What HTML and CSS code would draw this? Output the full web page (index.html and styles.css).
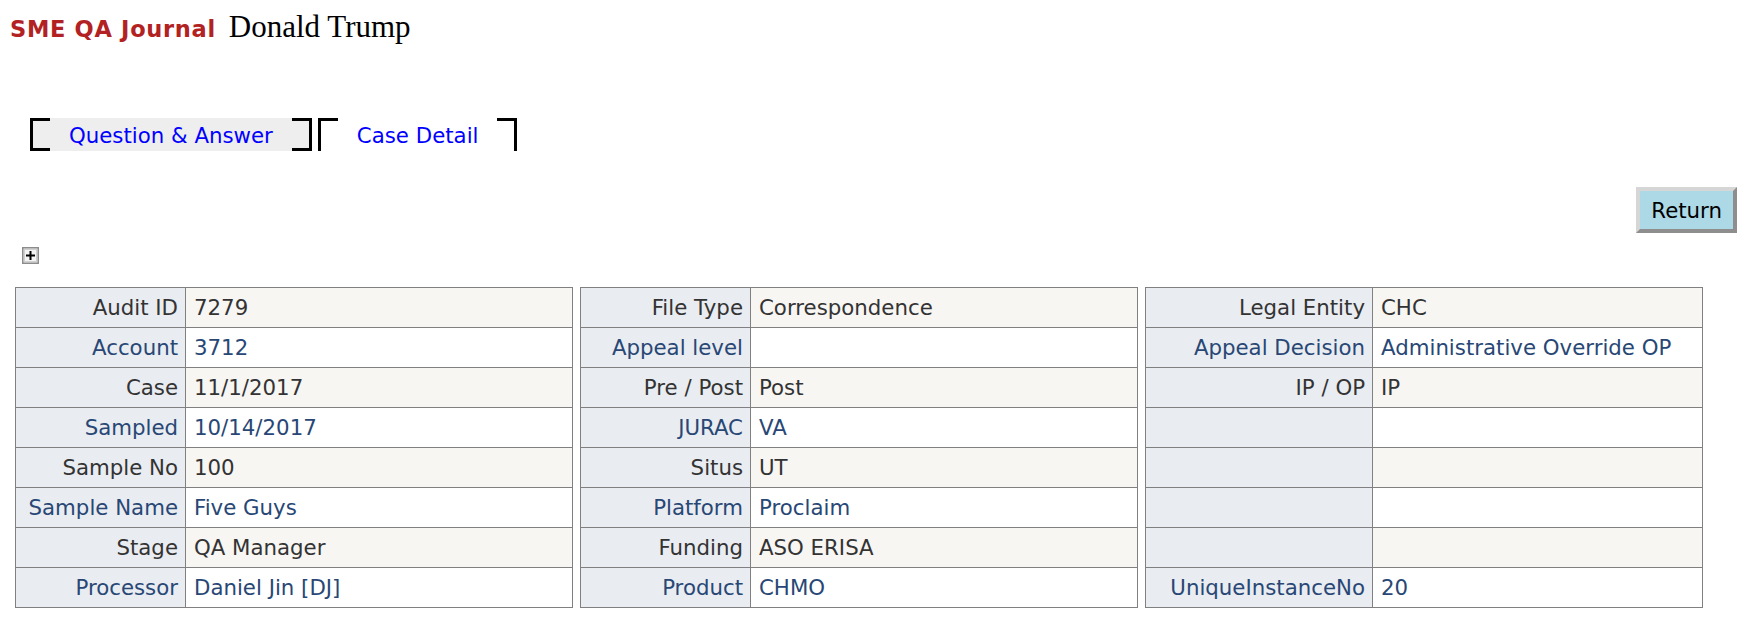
FILE: index.html
```html
<!DOCTYPE html>
<html>
<head>
<meta charset="utf-8">
<title>SME QA Journal</title>
<link rel="stylesheet" href="styles.css">
</head>
<body>
<div class="header">
  <span class="app">SME QA Journal</span>
  <span class="user">Donald Trump</span>
</div>
<div class="tabs">
  <a class="tab">Question &amp; Answer</a>
  <a class="tab active">Case Detail</a>
</div>
<div class="actions">
  <button class="btn">Return</button>
</div>
<div class="expander">
  <svg width="17" height="17" viewBox="0 0 17 17">
    <rect x="0.75" y="0.75" width="15.5" height="15.5" fill="#efefef" stroke="#8c8c8c" stroke-width="1.5"/>
    <rect x="2.5" y="2.5" width="12" height="12" fill="#f4f4f4" stroke="#d0d0d0" stroke-width="1"/>
    <path d="M4 8.5 H13 M8.5 4 V13" stroke="#000" stroke-width="2"/>
  </svg>
</div>
<div class="panels">
  <table class="details">
    <colgroup><col class="c-label"><col></colgroup>
    <tr class="odd"><td class="lbl">Audit ID</td><td>7279</td></tr>
    <tr class="even"><td class="lbl">Account</td><td>3712</td></tr>
    <tr class="odd"><td class="lbl">Case</td><td>11/1/2017</td></tr>
    <tr class="even"><td class="lbl">Sampled</td><td>10/14/2017</td></tr>
    <tr class="odd"><td class="lbl">Sample No</td><td>100</td></tr>
    <tr class="even"><td class="lbl">Sample Name</td><td>Five Guys</td></tr>
    <tr class="odd"><td class="lbl">Stage</td><td>QA Manager</td></tr>
    <tr class="even"><td class="lbl">Processor</td><td>Daniel Jin [DJ]</td></tr>
  </table>
  <table class="details">
    <colgroup><col class="c-label"><col></colgroup>
    <tr class="odd"><td class="lbl">File Type</td><td>Correspondence</td></tr>
    <tr class="even"><td class="lbl">Appeal level</td><td></td></tr>
    <tr class="odd"><td class="lbl">Pre / Post</td><td>Post</td></tr>
    <tr class="even"><td class="lbl">JURAC</td><td>VA</td></tr>
    <tr class="odd"><td class="lbl">Situs</td><td>UT</td></tr>
    <tr class="even"><td class="lbl">Platform</td><td>Proclaim</td></tr>
    <tr class="odd"><td class="lbl">Funding</td><td>ASO ERISA</td></tr>
    <tr class="even"><td class="lbl">Product</td><td>CHMO</td></tr>
  </table>
  <table class="details">
    <colgroup><col class="c-label-wide"><col></colgroup>
    <tr class="odd"><td class="lbl">Legal Entity</td><td>CHC</td></tr>
    <tr class="even"><td class="lbl">Appeal Decision</td><td>Administrative Override OP</td></tr>
    <tr class="odd"><td class="lbl">IP / OP</td><td>IP</td></tr>
    <tr class="even"><td class="lbl"></td><td></td></tr>
    <tr class="odd"><td class="lbl"></td><td></td></tr>
    <tr class="even"><td class="lbl"></td><td></td></tr>
    <tr class="odd"><td class="lbl"></td><td></td></tr>
    <tr class="even"><td class="lbl">UniqueInstanceNo</td><td>20</td></tr>
  </table>
</div>
</body>
</html>
```
FILE: styles.css
```css
html, body {
  margin: 0;
  padding: 0;
  background: #ffffff;
}
body {
  font-family: "DejaVu Sans", Verdana, sans-serif;
  font-size: 21.3px;
  color: #000;
}
.header {
  display: flex;
  align-items: baseline;
  height: 45px;
  box-sizing: border-box;
  padding: 9px 0 0 10px;
}
.app {
  font-weight: bold;
  font-size: 22.5px;
  letter-spacing: 0.7px;
  color: #b22222;
}
.user {
  font-family: "Liberation Serif", "Times New Roman", serif;
  font-size: 31px;
  margin-left: 13px;
  color: #000;
}
.tabs {
  display: flex;
  gap: 6px;
  margin-top: 73px;
  padding-left: 30px;
}
.tab {
  position: relative;
  display: block;
  height: 33px;
  box-sizing: border-box;
  padding: 5px 39px 0 39px;
  line-height: 25px;
  color: #0000ff;
  background: #eeeeee;
  white-space: nowrap;
  cursor: pointer;
}
.tab::before,
.tab::after {
  content: "";
  position: absolute;
  top: 0;
  bottom: 0;
  width: 20px;
  box-sizing: border-box;
  border-top: 3px solid #000;
  border-bottom: 3px solid #000;
}
.tab::before {
  left: 0;
  border-left: 3px solid #000;
}
.tab::after {
  right: 0;
  border-right: 3px solid #000;
}
.tab.active {
  background: #ffffff;
}
.tab.active::before,
.tab.active::after {
  border-bottom: none;
}
.actions {
  display: flex;
  justify-content: flex-end;
  margin-top: 36px;
  padding-right: 23px;
}
.btn {
  font-family: "DejaVu Sans", Verdana, sans-serif;
  font-size: 21.3px;
  color: #000;
  background: #add8e6;
  height: 46px;
  padding: 0 11px;
  border-style: solid;
  border-width: 4px;
  border-color: #d6d6d6 #8e8e8e #8e8e8e #d6d6d6;
  margin: 0;
}
.expander {
  margin-top: 14px;
  padding-left: 22px;
  height: 17px;
  line-height: 0;
}
.panels {
  display: flex;
  gap: 7px;
  margin-top: 23px;
  padding-left: 15px;
}
.details {
  width: 558px;
  border-collapse: collapse;
  table-layout: fixed;
  border: 1px solid #808080;
}
.c-label { width: 170px; }
.c-label-wide { width: 227px; }
.details td {
  height: 40px;
  box-sizing: border-box;
  border: 1px solid #808080;
  padding: 0 7px 0 8px;
  vertical-align: middle;
  white-space: nowrap;
  overflow: hidden;
}
.details td.lbl {
  text-align: right;
  background: #e9ecf1;
}
.details tr.odd td {
  color: #333333;
}
.details tr.odd td:not(.lbl) {
  background: #f7f6f3;
}
.details tr.even td {
  color: #284775;
}
.details tr.even td:not(.lbl) {
  background: #ffffff;
}
```
